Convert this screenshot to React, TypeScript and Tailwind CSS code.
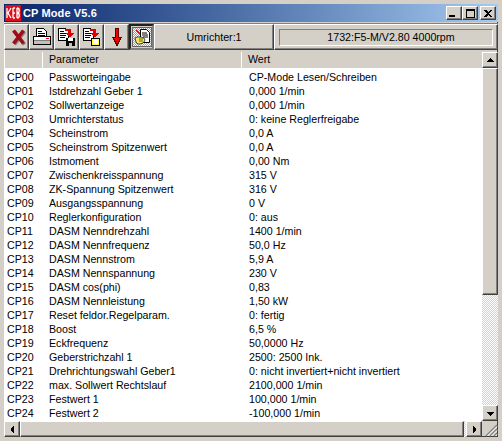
import React from 'react';

const rows = [
  ['CP00', 'Passworteingabe', 'CP-Mode Lesen/Schreiben'],
  ['CP01', 'Istdrehzahl Geber 1', '0,000 1/min'],
  ['CP02', 'Sollwertanzeige', '0,000 1/min'],
  ['CP03', 'Umrichterstatus', '0: keine Reglerfreigabe'],
  ['CP04', 'Scheinstrom', '0,0 A'],
  ['CP05', 'Scheinstrom Spitzenwert', '0,0 A'],
  ['CP06', 'Istmoment', '0,00 Nm'],
  ['CP07', 'Zwischenkreisspannung', '315 V'],
  ['CP08', 'ZK-Spannung Spitzenwert', '316 V'],
  ['CP09', 'Ausgangsspannung', '0 V'],
  ['CP10', 'Reglerkonfiguration', '0: aus'],
  ['CP11', 'DASM Nenndrehzahl', '1400 1/min'],
  ['CP12', 'DASM Nennfrequenz', '50,0 Hz'],
  ['CP13', 'DASM Nennstrom', '5,9 A'],
  ['CP14', 'DASM Nennspannung', '230 V'],
  ['CP15', 'DASM cos(phi)', '0,83'],
  ['CP16', 'DASM Nennleistung', '1,50 kW'],
  ['CP17', 'Reset feldor.Regelparam.', '0: fertig'],
  ['CP18', 'Boost', '6,5 %'],
  ['CP19', 'Eckfrequenz', '50,0000 Hz'],
  ['CP20', 'Geberstrichzahl 1', '2500: 2500 Ink.'],
  ['CP21', 'Drehrichtungswahl Geber1', '0: nicht invertiert+nicht invertiert'],
  ['CP22', 'max. Sollwert Rechtslauf', '2100,000 1/min'],
  ['CP23', 'Festwert 1', '100,000 1/min'],
  ['CP24', 'Festwert 2', '-100,000 1/min'],
];

const raised = 'border border-t-white border-l-white border-r-[#404040] border-b-[#404040] shadow-[inset_-1px_-1px_0_#808080]';

// page with the small red arrow, shared by save and load
const PageArrow = () => (
  <>
    <path d="M.5.5h7l3 3v9h-10z" fill="#fff" stroke="#000" />
    <path d="M2 3h4M2 5h7M2 7h6M2 9h5" stroke="#000" />
    <path d="M7 1h6v4h3l-4 5-4-5h2V3H7z" fill="#e00000" />
  </>
);

const icons = [
  <svg width="16" height="18" viewBox="0 0 16 18" key="x" className="ml-[4px]">
    <path d="M3.500 3.500L13.500 16.500M13.500 3.500L3.500 16.500" stroke="#808080" strokeWidth="3.6" />
    <path d="M2.500 2.500L12.500 15.500M12.500 2.500L2.500 15.500" stroke="#a00d18" strokeWidth="3.6" />
  </svg>,
  <svg width="18" height="18" viewBox="0 0 18 18" key="p" shapeRendering="crispEdges">
    <path d="M3.500.5h7l3 3v5h-10z" fill="#fff" stroke="#000" />
    <path d="M5 3h4M5 5h7M5 7h7" stroke="#000" />
    <path d="M.5 8.500h17v8H.5z" fill="#fff" stroke="#000" />
    <path d="M1 13h16v3H1z" fill="#c0c0c0" />
    <path d="M1 12h16" stroke="#808080" />
    <path d="M13 10h3" stroke="#ff0000" />
  </svg>,
  <svg width="18" height="18" viewBox="0 0 18 18" key="s" shapeRendering="crispEdges">
    <PageArrow />
    <path d="M8 10h9v8H8z" fill="#000" />
    <path d="M10 10h5v3h-5z" fill="#fff" />
    <path d="M11 15h3v3h-3z" fill="#c0c0c0" />
  </svg>,
  <svg width="18" height="18" viewBox="0 0 18 18" key="l" shapeRendering="crispEdges">
    <PageArrow />
    <path d="M8.500 10.500h8v7h-8z" fill="#ffff40" stroke="#000" />
    <path d="M10 12h5v4h-5z" fill="#fff" />
  </svg>,
  <svg width="10" height="18" viewBox="0 0 10 18" key="d" shapeRendering="crispEdges">
    <path d="M3 0h4v9h3v1H9v2H8v2H7v2H6v2H4v-2H3v-2H2v-2H1v-2H0V9h3z" fill="#600000" />
    <path d="M4 1h2v9h2v1H7v2H6v2H4v-2H3v-2H2v-1h2z" fill="#f00000" />
  </svg>,
  <svg width="20" height="20" viewBox="0 0 20 20" key="c">
    <defs>
      <pattern id="dots" width="2" height="2" patternUnits="userSpaceOnUse">
        <rect width="2" height="2" fill="#fff" />
        <rect width="1" height="1" fill="#a0a0a0" />
        <rect x="1" y="1" width="1" height="1" fill="#a0a0a0" />
      </pattern>
    </defs>
    <rect x=".5" y=".5" width="19" height="19" fill="url(#dots)" stroke="#000" strokeDasharray="1 1" />
    <path d="M8.500 2.500h6l3 3v10h-9z" fill="#fff" stroke="#000" />
    <path d="M10 6h5M10 8h6M11 10h5" stroke="#000" />
    <path d="M3 11l2-1 4 0 3 1 1 2-1 2-1 1-3 1H6l-2-2z" fill="#f5e860" stroke="#000" strokeWidth=".7" />
    <path d="M7 12h4M7 14h4" stroke="#000" strokeWidth=".6" />
    <path d="M4 3l4 4" stroke="#e00000" strokeWidth="1.2" />
  </svg>,
];

const Tri = ({ d }: { d: string }) => (
  <svg width="7" height="7" viewBox="0 0 7 7" shapeRendering="crispEdges">
    <path d={d} fill="#000" />
  </svg>
);

const App = () => {
  return (
    <div
      className="w-[502px] h-[441px] overflow-hidden bg-[#d4d0c8] border-[4px] border-[#d4d0c8] shadow-[inset_1px_1px_0_#fff,inset_-1px_-1px_0_#404040] flex flex-col text-[10.67px] leading-[14px] text-black"
      style={{ fontFamily: '"Liberation Sans", Arial, sans-serif' }}
    >
      {/* title bar */}
      <div className="h-[18px] shrink-0 flex items-center bg-gradient-to-r from-[#0a246a] to-[#a6caf0] pl-[1px] pr-[2px]">
        <svg width="16" height="16" viewBox="0 0 16 16" className="shrink-0">
          <rect width="16" height="16" fill="#d8101c" />
          <path d="M2 3v10M6 3L3 8l3 5M8 3v10M8 3h2M8 8h2M8 13h2M12 3v10M12 3c3 0 3 5 0 5c3 0 3 5 0 5" fill="none" stroke="#fff" strokeWidth="1.3" />
        </svg>
        <span className="ml-[2px] flex-1 text-white font-bold text-[11px] tracking-[0.12px]">CP Mode V5.6</span>
        <div className="flex">
          <button className={`w-[16px] h-[14px] bg-[#d4d0c8] flex items-end p-[2px] ${raised}`}>
            <span className="w-[6px] h-[2px] bg-black" />
          </button>
          <button className={`w-[16px] h-[14px] bg-[#d4d0c8] flex items-center justify-center ${raised}`}>
            <span className="w-[9px] h-[9px] border border-black border-t-2" />
          </button>
          <button className={`ml-[2px] w-[16px] h-[14px] bg-[#d4d0c8] flex items-center justify-center ${raised}`}>
            <svg width="8" height="7" viewBox="0 0 8 7" shapeRendering="crispEdges">
              <path d="M0 0h2l2 2 2-2h2L5 3.500 8 7H6L4 5 2 7H0l3-3.500z" fill="#000" />
            </svg>
          </button>
        </div>
      </div>

      {/* toolbar */}
      <div className="mt-[1px] h-[26px] shrink-0 flex border-t border-[#808080]">
        {icons.map((icon, i) => (
          <div
            key={i}
            className={
              i === 5
                ? 'w-[25px] h-[26px] flex items-center justify-center bg-[#d4d0c8] border-2 border-t-[#202020] border-l-[#202020] border-r-[#808080] border-b-[#808080]'
                : `w-[25px] h-[26px] flex items-center justify-center ${raised}`
            }
          >
            {icon}
          </div>
        ))}
        <div className={`w-[120px] h-[26px] flex items-center justify-center ${raised}`}>Umrichter:1</div>
        <div className={`flex-1 h-[26px] px-[4px] flex items-center ${raised}`}>
          <div className="w-full h-[17px] pl-[10px] flex items-center justify-center border border-t-[#808080] border-l-[#808080] border-r-white border-b-white">
            1732:F5-M/V2.80 4000rpm
          </div>
        </div>
      </div>

      {/* grid */}
      <div className="mt-[3px] flex-1 min-h-0 flex">
        <div className="flex-1 min-w-0 flex flex-col">
          <div className="h-[16px] shrink-0 flex">
            <div className="w-[39px] border-r border-white" />
            <div className="w-[199px] pl-[6px] border-r border-white">Parameter</div>
            <div className="flex-1 pl-[6px]">Wert</div>
          </div>
          <div className="flex-1 min-h-0 bg-white pt-[2px] overflow-hidden">
            {rows.map((r) => (
              <div key={r[0]} className="h-[14px] flex whitespace-nowrap">
                <div className="w-[39px] pl-[3px]">{r[0]}</div>
                <div className="w-[199px] pl-[6px]">{r[1]}</div>
                <div className="flex-1 pl-[7px]">{r[2]}</div>
              </div>
            ))}
          </div>
          <div className="h-[16px] shrink-0 flex">
            <div className={`w-[16px] flex items-center justify-center ${raised}`}>
              <Tri d="M4 0h1v7H4V6H3V5H2V2h1V1h1z" />
            </div>
            <div className={`flex-1 ${raised}`} />
            <div className="w-[2px] bg-[repeating-conic-gradient(#fff_0_25%,#d4d0c8_0_50%)] bg-[length:2px_2px]" />
            <div className={`w-[16px] flex items-center justify-center ${raised}`}>
              <Tri d="M2 0h1v1h1v1h1v3H4v1H3v1H2z" />
            </div>
          </div>
        </div>
        <div className="w-[16px] shrink-0 flex flex-col">
          <div className={`h-[16px] shrink-0 flex items-center justify-center ${raised}`}>
            <Tri d="M3 1h1v1h1v1h1v1h1v1H0V4h1V3h1V2h1z" />
          </div>
          <div className={`h-[227px] shrink-0 ${raised}`} />
          <div className="flex-1 bg-[repeating-conic-gradient(#fff_0_25%,#d4d0c8_0_50%)] bg-[length:2px_2px]" />
          <div className={`h-[16px] shrink-0 flex items-center justify-center ${raised}`}>
            <Tri d="M0 2h7v1H6v1H5v1H4v1H3V5H2V4H1V3H0z" />
          </div>
          <div className="h-[16px] shrink-0 flex items-end justify-end">
            <svg width="14" height="14" viewBox="0 0 14 14">
              <path d="M13 2L2 13M13 6L6 13M13 10L10 13" stroke="#808080" strokeWidth="1.5" />
              <path d="M13 3.500L3.500 13M13 7.500L7.500 13M13 11.500L11.500 13" stroke="#fff" />
            </svg>
          </div>
        </div>
      </div>
    </div>
  );
};

export default App;
